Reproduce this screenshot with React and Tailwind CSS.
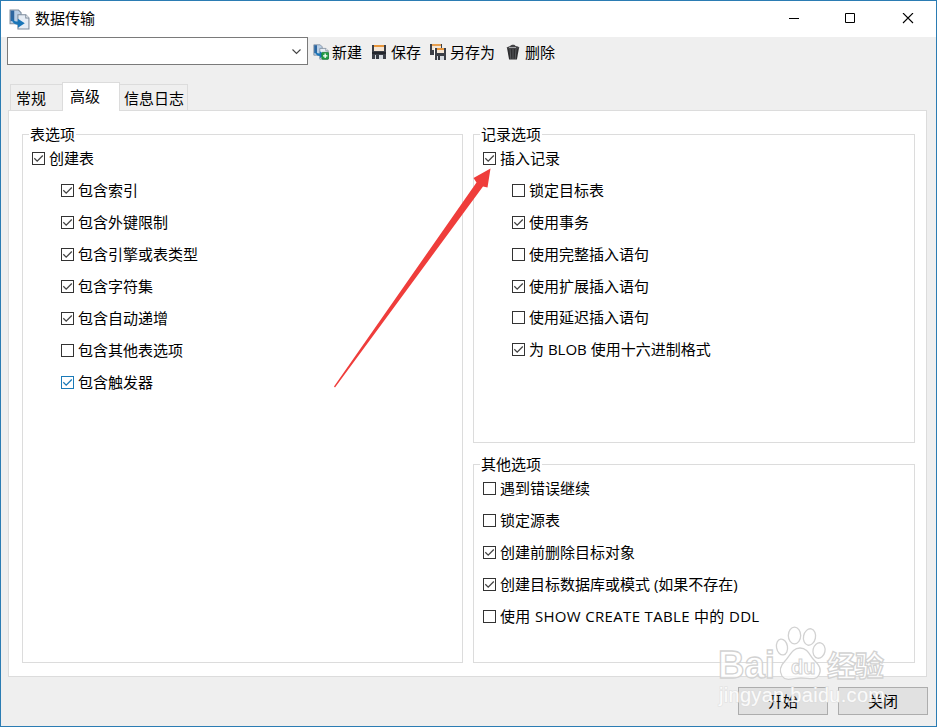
import { useState } from "react";

const tableOptions = [
  { label: "创建表", checked: true },
  { label: "包含索引", checked: true, sub: true },
  { label: "包含外键限制", checked: true, sub: true },
  { label: "包含引擎或表类型", checked: true, sub: true },
  { label: "包含字符集", checked: true, sub: true },
  { label: "包含自动递增", checked: true, sub: true },
  { label: "包含其他表选项", checked: false, sub: true },
  { label: "包含触发器", checked: true, sub: true, hot: true },
];

const recordOptions = [
  { label: "插入记录", checked: true },
  { label: "锁定目标表", checked: false, sub: true },
  { label: "使用事务", checked: true, sub: true },
  { label: "使用完整插入语句", checked: false, sub: true },
  { label: "使用扩展插入语句", checked: true, sub: true },
  { label: "使用延迟插入语句", checked: false, sub: true, tight: true },
  { label: "为 BLOB 使用十六进制格式", checked: true, sub: true },
];

const otherOptions = [
  { label: "遇到错误继续", checked: false },
  { label: "锁定源表", checked: false },
  { label: "创建前删除目标对象", checked: true },
  { label: "创建目标数据库或模式 (如果不存在)", checked: true },
  { label: "使用 SHOW CREATE TABLE 中的 DDL", checked: false, wide: true },
];

function TransferIcon({ size, plus }) {
  return (
    <svg width={size} height={size} viewBox="0 0 20 20" className="shrink-0">
      <path d="M1 1h8l2.500 2.500V14H1z" fill="#b9cfe6" stroke="#7d8c9c" />
      <path d="M1.500 1.500h3.500v10H1.500z" fill="#2d669f" />
      <path d="M8.500 5.500h7.500l3 3v10.500H8.500z" fill="#e6edf5" stroke="#7d8c9c" />
      <path d="M16 5.500v3h3" fill="#fff" stroke="#7d8c9c" />
      <path d="M2.500 6c0 4 2 6 6 6V9.200l6.500 4.300-6.500 4.400v-3C4.500 15 2 12 2.500 6z" fill="#1976b8" />
      {plus && (
        <>
          <rect x="11" y="10.500" width="8.500" height="8.500" rx="1" fill="#23a047" stroke="#177a32" />
          <path d="M15.200 12v5.500M12.500 14.800H18" stroke="#fff" strokeWidth="1.600" />
        </>
      )}
    </svg>
  );
}

function SaveIcon() {
  return (
    <svg width="16" height="16" viewBox="0 0 16 16" className="shrink-0">
      <path d="M1 1h14v14H1z" fill="#3b3f47" />
      <path d="M3 1h10v6H3z" fill="#f4e6d6" />
      <path d="M3 1h10v2H3z" fill="#e8963c" />
      <path d="M1 8h14v2H1z" fill="#23262c" />
      <path d="M4 11h8v4H4z" fill="#d5dae0" />
      <path d="M5 11h3v4H5z" fill="#343941" />
    </svg>
  );
}

function SaveAsIcon() {
  return (
    <svg width="17" height="16" viewBox="0 0 17 16" className="shrink-0">
      <path d="M0 0h12v11H0z" fill="#3b3f47" />
      <path d="M2 0h9v6H2z" fill="#f4e6d6" />
      <path d="M2 0h9v2H2z" fill="#e8a050" />
      <path d="M4 4h1v10H4z" fill="#fff" />
      <path d="M5 4h11v12H5z" fill="#3b3f47" />
      <path d="M7 4h7v5H7z" fill="#f4e6d6" />
      <path d="M7 4h7v2H7z" fill="#e8963c" />
      <path d="M7 12h7v4H7z" fill="#d5dae0" />
      <path d="M8 12h2v4H8z" fill="#343941" />
    </svg>
  );
}

function TrashIcon() {
  return (
    <svg width="14" height="16" viewBox="0 0 14 16" className="shrink-0">
      <path d="M1 4h12l-2.100 11.500H3.100z" fill="#2e2e30" />
      <path d="M4 5l.8 10M7 5v10M10 5l-.8 10" stroke="#66686b" strokeWidth=".8" />
      <path d="M.5 3.500C2 2.500 4 2.500 5 1.200 7 .4 9 .6 9.500 2c2 .2 3 .6 4 1.800L12 5H2z" fill="#434346" />
      <path d="M3 3.500h7" stroke="#a4a6a8" />
    </svg>
  );
}

function Option({ option }) {
  const [checked, setChecked] = useState(option.checked);
  const color = option.hot ? "border-[#1a7ab8] text-[#1a7ab8]" : "border-[#333] text-[#444]";

  return (
    <label
      className={`flex items-center ${option.tight ? "-mt-px" : ""} ${option.sub ? "pl-[29px]" : ""} h-8`}
      onClick={() => setChecked(!checked)}
    >
      <span className={`mt-px mr-1 flex size-[13px] shrink-0 border bg-white ${color}`}>
        {checked && (
          <svg width="11" height="11" viewBox="0 0 11 11" fill="none">
            <path d="M1.300 5.300l2.900 2.900L9.800 2.500" stroke="currentColor" strokeWidth="1.300" />
          </svg>
        )}
      </span>
      <span className={`whitespace-pre ${option.wide ? "tracking-[0.33px]" : ""}`}>{option.label}</span>
    </label>
  );
}

function Group({ title, options, className }) {
  return (
    <section className={`border border-[#dcdcdc] pl-[9px] ${className}`}>
      <h2 className="-mt-[9px] -mb-px -ml-[3px] h-[17px] w-fit bg-white px-px leading-[17px]">{title}</h2>
      {options.map((option) => (
        <Option key={option.label} option={option} />
      ))}
    </section>
  );
}

function Watermark() {
  return (
    <div className="pointer-events-none absolute top-[624px] left-[715px] h-[85px] w-[172px]">
      <svg width="172" height="85" viewBox="0 0 172 85" fill="#fff" fillOpacity="0.75" stroke="#d2d2d2" strokeWidth="1.300">
        <ellipse cx="66" cy="22" rx="5.500" ry="8" transform="rotate(-10 66 22)" />
        <ellipse cx="78.500" cy="10.500" rx="6.200" ry="8.300" />
        <ellipse cx="93.500" cy="12" rx="6" ry="8.300" transform="rotate(12 93.500 12)" />
        <ellipse cx="103" cy="25.500" rx="6" ry="7.800" transform="rotate(12 103 25.500)" />
        <path d="M84 23c-8 0-10 8-15 13-5 5-6 10-3 15 4 6 11 2 19 2s15 3 18-3c3-6 0-10-5-15-4-4-6-12-14-12z" />
        <g fontFamily="Liberation Sans, sans-serif" fontWeight="bold">
          <text x="2" y="53" fontSize="38" textLength="57" lengthAdjust="spacingAndGlyphs">Bai</text>
          <text x="75" y="49" fontSize="20" strokeWidth="1">du</text>
        </g>
        <text x="111" y="52" fontSize="29" fontWeight="bold" fontFamily="Noto Sans CJK SC, sans-serif" textLength="57">经验</text>
        <text x="3" y="77" fontSize="20" fontFamily="Liberation Sans, sans-serif" textLength="166" stroke="#dcdcdc" strokeWidth="1.600" paintOrder="stroke" fillOpacity="0.9" strokeOpacity="0.6">jingyan.baidu.com</text>
      </svg>
    </div>
  );
}

export default function App() {
  return (
    <div className="relative flex h-[727px] w-[937px] flex-col overflow-hidden border border-[#2b7cb3] bg-[#efefef] font-['Open_Sans','Noto_Sans_CJK_SC',sans-serif] text-[15px] leading-5 text-black select-none">
      {/* Title bar */}
      <header className="flex h-9 shrink-0 items-center bg-white pl-2">
        <TransferIcon size={21} />
        <h1 className="-mt-[2px] ml-[5px] leading-5">数据传输</h1>
        <div className="ml-auto flex h-full">
          <button className="flex w-[57px] items-center justify-center">
            <svg width="12" height="12" viewBox="0 0 12 12"><path d="M1 5.500h10" stroke="#000" /></svg>
          </button>
          <button className="flex w-[57px] items-center justify-center">
            <svg width="12" height="12" viewBox="0 0 12 12"><path d="M.5.500h9v9h-9z" fill="none" stroke="#000" /></svg>
          </button>
          <button className="flex w-[57px] items-center justify-center">
            <svg width="12" height="12" viewBox="0 0 12 12"><path d="M1 0l10 10M11 0L1 10" stroke="#000" strokeWidth="1.100" /></svg>
          </button>
        </div>
      </header>

      {/* Profile toolbar */}
      <div className="flex h-7 shrink-0 items-center pl-[6px]">
        <div className="flex h-7 w-[301px] items-center justify-end border border-[#7a7a7a] bg-white pt-[2px] pr-[6px]">
          <svg width="9" height="6" viewBox="0 0 9 6" fill="none"><path d="M.5.500l4 4 4-4" stroke="#444" strokeWidth="1.100" /></svg>
        </div>
        <div className="ml-[5px] flex items-center pt-px">
          <TransferIcon size={16} plus />
          <span className="ml-[3px] w-[39px]">新建</span>
          <SaveIcon />
          <span className="ml-1 w-[39px]">保存</span>
          <SaveAsIcon />
          <span className="ml-[3px] w-[56px]">另存为</span>
          <TrashIcon />
          <span className="ml-[5px]">删除</span>
        </div>
      </div>

      {/* Tabs */}
      <nav className="mt-[17px] flex h-7 shrink-0 items-end pl-[9px]">
        <button className="h-[26px] w-[52px] border border-r-0 border-b-0 border-[#dcdcdc] pl-[5px] text-left">常规</button>
        <button className="z-10 -mb-px h-[29px] w-[58px] border border-b-0 border-[#dcdcdc] bg-white pb-[2px] pl-[7px] text-left">高级</button>
        <button className="h-[26px] w-[68px] border border-b-0 border-l-0 border-[#dcdcdc] pl-[4px] text-left whitespace-nowrap">信息日志</button>
      </nav>

      <main className="ml-[7px] flex h-[567px] w-[919px] shrink-0 gap-[10px] border border-[#dcdcdc] bg-white pt-[23px] pl-[13px]">
        <Group title="表选项" options={tableOptions} className="h-[529px] w-[441px]" />
        <div className="flex flex-col gap-[21px]">
          <Group title="记录选项" options={recordOptions} className="h-[309px] w-[442px]" />
          <Group title="其他选项" options={otherOptions} className="h-[199px] w-[442px]" />
        </div>
      </main>

      <footer className="mt-[10px] flex justify-end gap-[10px] pr-[8px]">
        <button className="h-[28px] w-[90px] border border-[#adadad] bg-[#e1e1e1]">开始</button>
        <button className="h-[28px] w-[90px] border border-[#adadad] bg-[#e1e1e1]">关闭</button>
      </footer>

      {/* Pointer arrow towards the insert option */}
      <svg className="pointer-events-none absolute top-[164px] left-[330px]" width="165" height="226" viewBox="0 0 165 226">
        <path d="M3 221.500L145.500 17.500l-3-4.500L159.500 3.500l-3 19-4.500-1L4 222.500z" fill="#ef3d3b" />
      </svg>

      <Watermark />
    </div>
  );
}
